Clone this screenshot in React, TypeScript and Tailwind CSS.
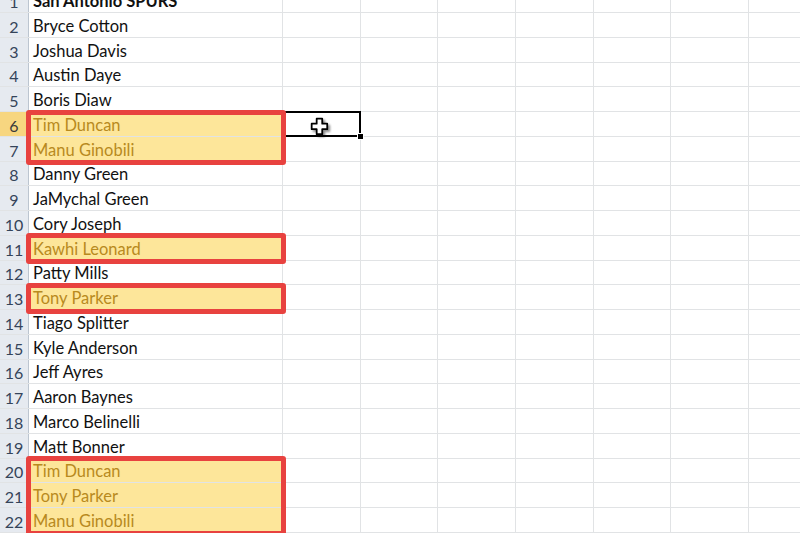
import React from 'react';

const players = [
  'San Antonio SPURS',
  'Bryce Cotton',
  'Joshua Davis',
  'Austin Daye',
  'Boris Diaw',
  'Tim Duncan',
  'Manu Ginobili',
  'Danny Green',
  'JaMychal Green',
  'Cory Joseph',
  'Kawhi Leonard',
  'Patty Mills',
  'Tony Parker',
  'Tiago Splitter',
  'Kyle Anderson',
  'Jeff Ayres',
  'Aaron Baynes',
  'Marco Belinelli',
  'Matt Bonner',
  'Tim Duncan',
  'Tony Parker',
  'Manu Ginobili',
];

// rows flagged as duplicates (1-based)
const dupes = new Set([6, 7, 11, 13, 20, 21, 22]);

// red annotation boxes: [firstRow, lastRow]
const boxes: [number, number][] = [
  [6, 7],
  [11, 11],
  [13, 13],
  [20, 22],
];

const ROW_H = 24.75;

function PlusCursor() {
  return (
    <svg width="20" height="20" viewBox="0 0 18 18" className="drop-shadow-[2px_2px_1px_rgba(0,0,0,0.45)]">
      <path
        d="M6 1.5h5v4.5h4.5v5H11v4.5H6V11H1.5V6H6z"
        fill="#fff"
        stroke="#000"
        strokeWidth="1.6"
        strokeLinejoin="round"
      />
    </svg>
  );
}

export default function App() {
  return (
    <div className="w-[800px] h-[533px] overflow-hidden bg-white relative font-['Lato','Liberation_Sans',sans-serif]">
      <div className="relative -mt-[11.75px]">
        {players.map((name, i) => {
          const row = i + 1;
          const isDupe = dupes.has(row);
          const isActiveRow = row === 6;
          return (
            <div key={row} className="flex h-[24.75px] border-b border-[#e1e3e5]">
              <div
                className={`w-[29px] shrink-0 flex items-end justify-center leading-[21px] text-[16px] border-r border-[#bcc5d0] ${
                  isActiveRow ? 'bg-[#f7d680] text-[#3a3a3a]' : 'bg-[#e6eaf0] text-[#35445a]'
                }`}
              >
                {row}
              </div>
              <div
                className={`w-[254px] shrink-0 flex items-end pl-[4px] leading-[21px] text-[16.5px] whitespace-nowrap border-r border-[#e1e3e5] ${
                  isDupe ? 'bg-[#fde69a] text-[#b88a1e]' : 'text-[#111]'
                } ${row === 1 ? 'font-bold' : ''}`}
              >
                {name}
              </div>
              {Array.from({ length: 7 }).map((_, c) => (
                <div key={c} className="w-[77.7px] shrink-0 border-r border-[#e1e3e5]" />
              ))}
            </div>
          );
        })}

        {/* selected cell B6 */}
        <div
          className="absolute left-[283px] w-[78px] border-[2.5px] border-black"
          style={{ top: 5 * ROW_H - 1, height: ROW_H + 1.5 }}
        >
          <div className="absolute -right-[5px] -bottom-[5px] w-[7px] h-[7px] bg-black border border-white" />
        </div>

        {/* red annotation boxes */}
        {boxes.map(([a, b]) => (
          <div
            key={a}
            className="absolute left-[26px] w-[260px] border-[5px] border-[#e8423f] rounded-[3px]"
            style={{ top: (a - 1) * ROW_H - 2.5, height: (b - a + 1) * ROW_H + 6 }}
          />
        ))}
      </div>

      <div className="absolute left-[310px] top-[117px]">
        <PlusCursor />
      </div>
    </div>
  );
}
